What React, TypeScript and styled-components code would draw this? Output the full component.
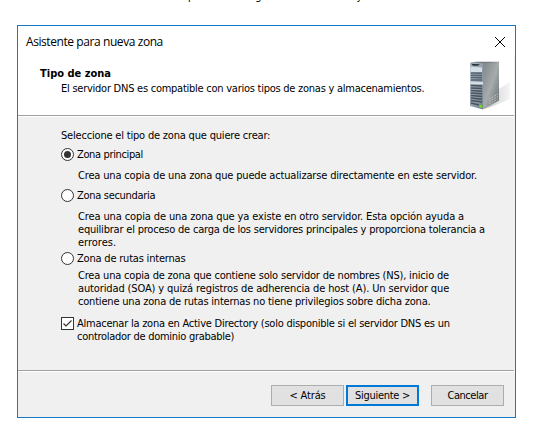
import React from 'react';
import styled, { createGlobalStyle } from 'styled-components';

const GlobalStyle = createGlobalStyle`
  * { box-sizing: border-box; }
  html, body, #root { margin: 0; padding: 0; background: #fff; }
  body { overflow: hidden; }
`;

const Page = styled.main`
  width: 541px;
  height: 435px;
  overflow: hidden;
  background: #fff;
  font-family: 'DejaVu Sans Condensed', 'DejaVu Sans', sans-serif;
  font-stretch: condensed;
  font-size: 11px;
  line-height: 13px;
  color: #000;
`;

const Caption = styled.div`
  height: 25px;
  padding-left: 188px;
  display: flex;
  align-items: flex-start;
  gap: 61px;
  overflow: hidden;
  span { margin-top: -10px; }
  span:last-child { margin-left: 34px; }
`;

const Dialog = styled.section`
  width: 499px;
  height: 393px;
  margin-left: 17px;
  border: 1px solid #1a78c2;
  background: #f0f0f0;
  display: flex;
  flex-direction: column;
`;

const TitleBar = styled.header`
  height: 31px;
  flex: none;
  padding: 0 9px 0 8px;
  background: #fff;
  display: flex;
  align-items: center;
  justify-content: space-between;
  font-family: 'Open Sans', 'Noto Sans', sans-serif;
  font-stretch: normal;
  font-size: 12px;
`;

const Banner = styled.div`
  height: 59px;
  flex: none;
  margin-right: 1px;
  padding: 4px 3px 0 22px;
  background: #fff;
  border-bottom: 1px solid #a0a0a0;
  display: flex;
  justify-content: space-between;
`;

const BannerText = styled.div`
  padding-top: 6px;
`;

const Heading = styled.h1`
  margin: 0 0 2px;
  font-size: 11px;
  line-height: 13px;
  font-weight: bold;
`;

const Line = styled.div<{ $ls?: number; $indent?: number }>`
  white-space: nowrap;
  letter-spacing: ${(p) => p.$ls ?? 0}px;
  padding-left: ${(p) => p.$indent ?? 0}px;
`;

const Body = styled.div`
  height: 255px;
  flex: none;
  margin-right: 1px;
  padding: 12px 0 0 43px;
  border-top: 1px solid #fff;
  border-bottom: 1px solid #a0a0a0;
`;

const Option = styled.label<{ $top: number }>`
  margin-top: ${(p) => p.$top}px;
  display: flex;
  gap: 3px;
  height: 13px;
`;

const Radio = styled.span`
  width: 13px;
  height: 13px;
  border: 1px solid #333;
  border-radius: 50%;
  background: #fff;
  display: flex;
  align-items: center;
  justify-content: center;
`;

const Dot = styled.span`
  width: 7px;
  height: 7px;
  border-radius: 50%;
  background: #333;
`;

const Check = styled.span`
  width: 13px;
  height: 13px;
  border: 1px solid #333;
  background: #fff;
  svg { display: block; }
`;

const Description = styled.div<{ $top: number }>`
  margin: ${(p) => p.$top}px 0 0 17px;
`;

const Footer = styled.footer`
  flex: 1;
  border-top: 1px solid #fff;
  padding: 13px 11px 0 0;
  display: flex;
  justify-content: flex-end;
`;

const Button = styled.button<{ $primary?: boolean; $gap?: number; $ls?: number }>`
  width: 73px;
  height: 21px;
  margin: 0 0 0 ${(p) => p.$gap ?? 0}px;
  padding: 0 0 1px;
  border: ${(p) => (p.$primary ? '2px solid #0078d7' : '1px solid #adadad')};
  background: #e1e1e1;
  color: #000;
  font: inherit;
  letter-spacing: ${(p) => p.$ls ?? 0}px;
  white-space: nowrap;
`;

const ServerIcon = () => (
  <svg width="42" height="50" viewBox="0 0 42 50">
    <defs>
      <linearGradient id="side" x1="0" y1="0" x2="1" y2="1">
        <stop offset="0" stopColor="#7f8789" />
        <stop offset=".5" stopColor="#a6abac" />
        <stop offset="1" stopColor="#626a6d" />
      </linearGradient>
      <linearGradient id="front" x1="0" y1="0" x2="1" y2="1">
        <stop offset="0" stopColor="#b3bfc7" />
        <stop offset="1" stopColor="#75838e" />
      </linearGradient>
      <linearGradient id="shade" x1="0" y1="0" x2="1" y2="0">
        <stop offset="0" stopColor="#c9c9c9" />
        <stop offset="1" stopColor="#f5f5f5" />
      </linearGradient>
    </defs>
    <path d="M15 48 30 28 41 21V38L22 46Z" fill="url(#shade)" />
    <path d="M1 1.5 14 2V48.500L1 45Z" fill="url(#front)" />
    <path d="M14 2 30 1.500V39.500L14 48.500Z" fill="url(#side)" />
    <path d="M1 1.500 8 .7H30V1.500L14 2.300Z" fill="#737b7f" />
    <path d="M2 2.800 11 3.300 9 4.800H4Z" fill="#2c3338" />
    <path d="M1.500 6 13 6.500V11H1.500Z" fill="#d4e0e8" />
    <path d="M2 12 13 12.200M2 14.300 13 14.500M2 16.600 13 16.800M2 18.900 13 19.100" stroke="#566473" strokeWidth="1.500" />
    <path d="M1 20.500 14 21V23.500L1 23Z" fill="#d6dde1" />
    <path d="M2 24.500 13 25M2 27 13 27.600M2 29.500 13 30.200M2 32 13 32.800M2 34.500 13 35.500M2 37 13 38.200M2 39.500 13 41M2 42 10 44" stroke="#475460" strokeWidth="1.500" />
    <path d="M20 38 29 33M20 40.500 29 35.500M20 43 29 38" stroke="#c6cacb" strokeWidth=".8" strokeDasharray="2 1" />
    <path d="M10.500 43.800 13.200 44.500V46.800L10.500 46.200Z" fill="#6ee600" />
  </svg>
);

export default function App() {
  return (
    <Page>
      <GlobalStyle />
      <Caption><span>p</span><span>g</span><span>y</span></Caption>
      <Dialog>
        <TitleBar>
          <Line $ls={-0.42}>Asistente para nueva zona</Line>
          <svg width="12" height="12" viewBox="0 0 12 12"><path d="M1 1 11 11M11 1 1 11" stroke="#000" /></svg>
        </TitleBar>
        <Banner>
          <BannerText>
            <Heading>Tipo de zona</Heading>
            <Line $ls={-0.25} $indent={21}>El servidor DNS es compatible con varios tipos de zonas y almacenamientos.</Line>
          </BannerText>
          <ServerIcon />
        </Banner>
        <Body>
          <Line $ls={-0.19}>Seleccione el tipo de zona que quiere crear:</Line>
          <Option $top={6}><Radio><Dot /></Radio><Line $ls={-0.36}>Zona principal</Line></Option>
          <Description $top={8}><Line $ls={-0.165}>Crea una copia de una zona que puede actualizarse directamente en este servidor.</Line></Description>
          <Option $top={7}><Radio /><Line $ls={-0.3}>Zona secundaria</Line></Option>
          <Description $top={8}>
            <Line $ls={-0.12}>Crea una copia de una zona que ya existe en otro servidor. Esta opción ayuda a</Line>
            <Line $ls={-0.205}>equilibrar el proceso de carga de los servidores principales y proporciona tolerancia a</Line>
            <Line>errores.</Line>
          </Description>
          <Option $top={3}><Radio /><Line $ls={-0.2}>Zona de rutas internas</Line></Option>
          <Description $top={4}>
            <Line $ls={-0.19}>Crea una copia de zona que contiene solo servidor de nombres (NS), inicio de</Line>
            <Line $ls={-0.125}>autoridad (SOA) y quizá registros de adherencia de host (A). Un servidor que</Line>
            <Line $ls={-0.195}>contiene una zona de rutas internas no tiene privilegios sobre dicha zona.</Line>
          </Description>
          <Option $top={9}>
            <Check><svg width="11" height="11" viewBox="0 0 11 11"><path d="M1.500 5.500 4 8 9.500 2.500" fill="none" stroke="#333" strokeWidth="1.200" /></svg></Check>
            <div>
              <Line $ls={-0.24}>Almacenar la zona en Active Directory (solo disponible si el servidor DNS es un</Line>
              <Line $ls={-0.28}>controlador de dominio grabable)</Line>
            </div>
          </Option>
        </Body>
        <Footer>
          <Button $ls={-0.15}>&lt; Atrás</Button>
          <Button $primary $gap={2} $ls={-0.3}>Siguiente &gt;</Button>
          <Button $gap={12} $ls={-0.45}>Cancelar</Button>
        </Footer>
      </Dialog>
    </Page>
  );
}
